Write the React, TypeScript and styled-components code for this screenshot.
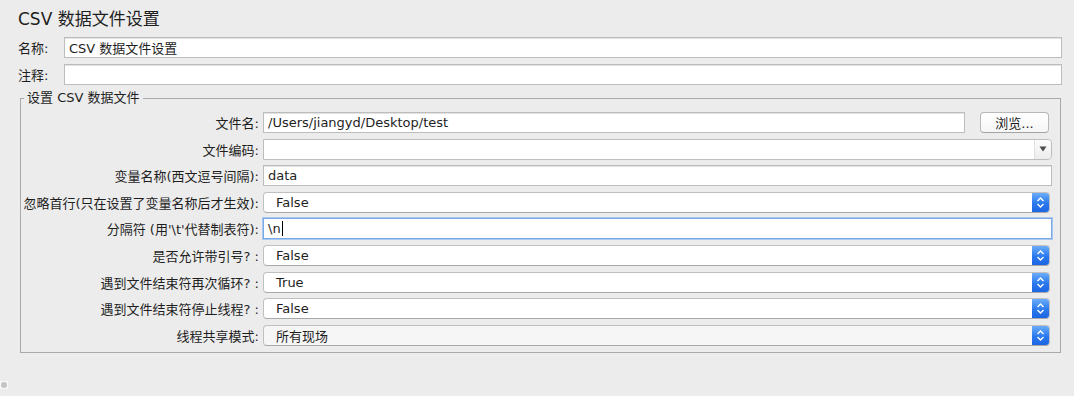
import React from 'react';
import styled, { createGlobalStyle } from 'styled-components';

const GlobalStyle = createGlobalStyle`
  html, body {
    margin: 0;
    background: #ececec;
    font-family: "DejaVu Sans", "Noto Sans CJK SC", sans-serif;
    font-size: 13px;
    color: #1e1e1e;
  }
`;

const Page = styled.div`
  position: relative;
  height: 396px;
  padding: 0 12px 0 18px;
  box-sizing: border-box;
`;

const Title = styled.h1`
  margin: 0;
  padding-top: 8px;
  font-size: 17px;
  font-weight: normal;
  line-height: 22px;
`;

const TopRow = styled.div<{ $gap: number }>`
  display: flex;
  align-items: center;
  height: 21px;
  margin-top: ${(p) => p.$gap}px;
`;

const TopLabel = styled.label`
  width: 46px;
  flex: none;
`;

const TextBox = styled.div<{ $focused?: boolean }>`
  flex: 1;
  height: 100%;
  box-sizing: border-box;
  display: flex;
  align-items: center;
  padding-left: 4px;
  background: #fff;
  border: 1px solid ${(p) => (p.$focused ? '#7aa9e8' : '#bdbdbd')};
  box-shadow: ${(p) => (p.$focused ? '0 0 0 1px #a9c8f0' : 'inset 0 1px 0 #e2e2e2')};
  white-space: nowrap;
  overflow: hidden;
`;

const Caret = styled.span`
  display: inline-block;
  width: 1px;
  height: 15px;
  margin-left: 1px;
  background: #000;
`;

const Group = styled.fieldset`
  margin: 5px 1px 0 2px;
  padding: 6px 8px 6px 1px;
  border: 1px solid #a9a9a9;
  min-width: 0;
`;

const Legend = styled.legend`
  margin-left: 2px;
  padding: 0 3px;
  line-height: 16px;
`;

const Form = styled.div`
  display: grid;
  grid-template-columns: 237px 1fr;
  grid-auto-rows: 21px;
  column-gap: 4px;
  row-gap: 5.6px;
`;

const Label = styled.label`
  display: flex;
  align-items: center;
  justify-content: flex-end;
  white-space: nowrap;
`;

const Field = styled.div<{ $inset?: number }>`
  display: flex;
  align-items: stretch;
  margin-right: ${(p) => p.$inset ?? 0}px;
  min-width: 0;
`;

const Button = styled.button`
  flex: none;
  width: 69px;
  margin: 0 3px 0 15px;
  padding: 0;
  font: inherit;
  color: #1e1e1e;
  background: linear-gradient(#ffffff, #f6f6f6);
  border: 1px solid #b8b8b8;
  border-bottom-color: #a4a4a4;
  border-radius: 4px;
`;

const Select = styled.div<{ $muted?: boolean }>`
  flex: 1;
  display: flex;
  box-sizing: border-box;
  background: ${(p) => (p.$muted ? '#f6f6f6' : '#fff')};
  border: 1px solid #c0c0c0;
  border-bottom-color: #a8a8a8;
  border-radius: 4px;
  overflow: hidden;
`;

const SelectText = styled.span`
  flex: 1;
  display: flex;
  align-items: center;
  padding-left: 12px;
`;

const Stepper = styled.span`
  flex: none;
  width: 17px;
  display: flex;
  align-items: center;
  justify-content: center;
  background: linear-gradient(#6cadf9, #2a78ee 55%, #1c66e2);
`;

const Combo = styled.div`
  flex: 1;
  display: flex;
  box-sizing: border-box;
  background: #fff;
  border: 1px solid #bdbdbd;
  border-radius: 0 4px 4px 0;
`;

const ComboArrow = styled.span`
  flex: none;
  width: 16px;
  display: flex;
  align-items: center;
  justify-content: center;
  background: linear-gradient(#fbfbfb, #ededed);
  border-left: 1px solid #e0e0e0;
  border-radius: 0 4px 4px 0;
`;

const Grip = styled.div`
  position: absolute;
  left: 0;
  top: 381px;
  width: 8px;
  height: 8px;
  background: #f7f7f7;
  &::after {
    content: '';
    position: absolute;
    left: 1px;
    top: 1px;
    width: 6px;
    height: 6px;
    border-radius: 50%;
    background: #c4c4c4;
  }
`;

const Chevrons = () => (
  <svg width="9" height="13" viewBox="0 0 9 13">
    <path d="M1.5 5 L4.5 2 L7.5 5 M1.5 8 L4.5 11 L7.5 8" fill="none" stroke="#fff" strokeWidth="1.4" />
  </svg>
);

const Dropdown = ({ value, muted }: { value: string; muted?: boolean }) => (
  <Select $muted={muted}>
    <SelectText>{value}</SelectText>
    <Stepper>
      <Chevrons />
    </Stepper>
  </Select>
);

const rows: { label: string; value: string }[] = [
  { label: '是否允许带引号? :', value: 'False' },
  { label: '遇到文件结束符再次循环? :', value: 'True' },
  { label: '遇到文件结束符停止线程? :', value: 'False' },
];

export default function App() {
  return (
    <>
      <GlobalStyle />
      <Page>
        <Title>CSV 数据文件设置</Title>
        <TopRow $gap={7}>
          <TopLabel>名称:</TopLabel>
          <TextBox>CSV 数据文件设置</TextBox>
        </TopRow>
        <TopRow $gap={6}>
          <TopLabel>注释:</TopLabel>
          <TextBox />
        </TopRow>
        <Group>
          <Legend>设置 CSV 数据文件</Legend>
          <Form>
            <Label>文件名:</Label>
            <Field>
              <TextBox>/Users/jiangyd/Desktop/test</TextBox>
              <Button>浏览...</Button>
            </Field>

            <Label>文件编码:</Label>
            <Field>
              <Combo>
                <SelectText />
                <ComboArrow>
                  <svg width="8" height="6" viewBox="0 0 8 6">
                    <path d="M0.5 0.5 H7.5 L4 5.5 Z" fill="#4a4a4a" />
                  </svg>
                </ComboArrow>
              </Combo>
            </Field>

            <Label>变量名称(西文逗号间隔):</Label>
            <Field>
              <TextBox>data</TextBox>
            </Field>

            <Label>忽略首行(只在设置了变量名称后才生效):</Label>
            <Field $inset={2}>
              <Dropdown value="False" />
            </Field>

            <Label>分隔符 (用'\t'代替制表符):</Label>
            <Field>
              <TextBox $focused>
                \n
                <Caret />
              </TextBox>
            </Field>

            {rows.map((r) => (
              <React.Fragment key={r.label}>
                <Label>{r.label}</Label>
                <Field $inset={2}>
                  <Dropdown value={r.value} />
                </Field>
              </React.Fragment>
            ))}

            <Label>线程共享模式:</Label>
            <Field $inset={2}>
              <Dropdown value="所有现场" muted />
            </Field>
          </Form>
        </Group>
        <Grip />
      </Page>
    </>
  );
}
